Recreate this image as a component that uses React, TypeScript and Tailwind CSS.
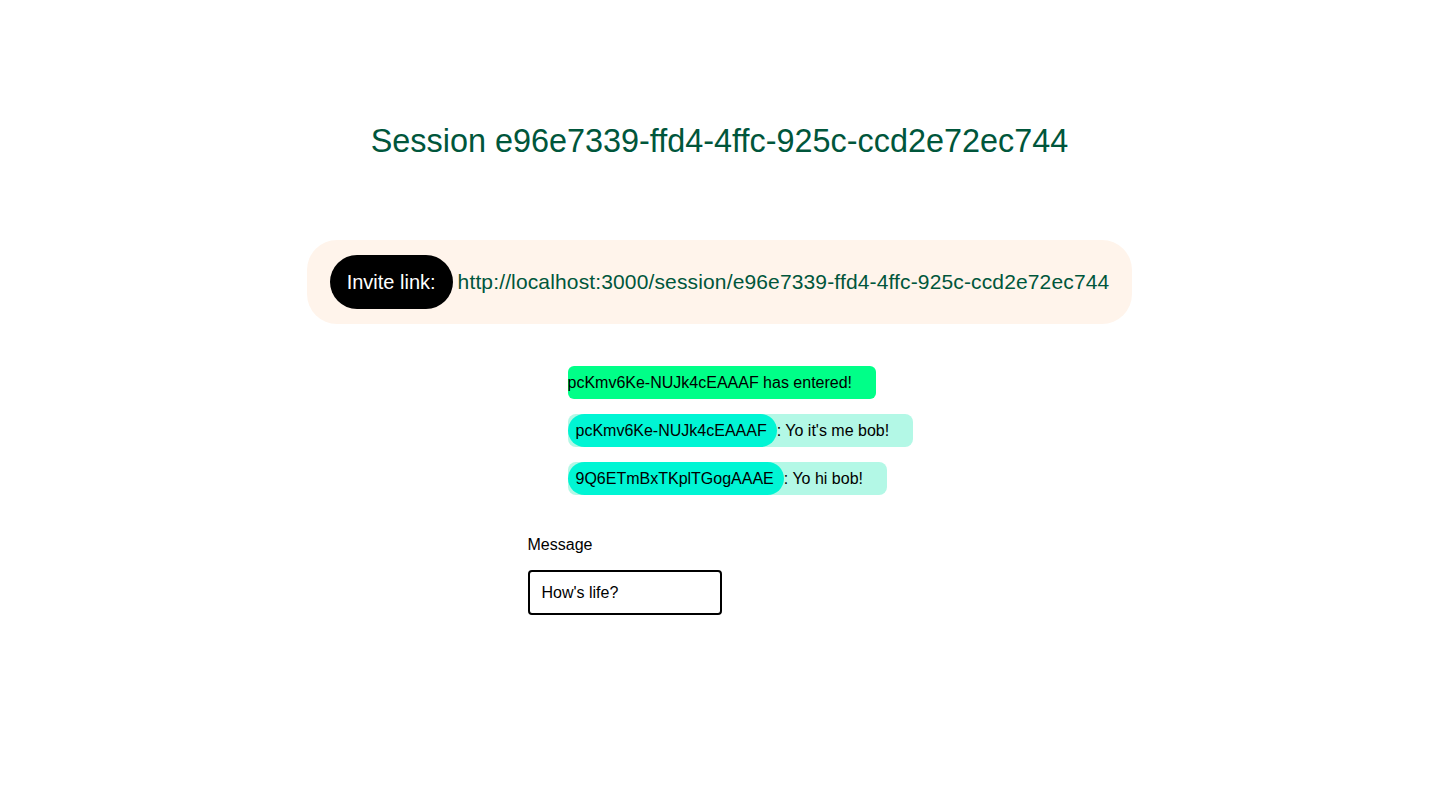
export default function App() {
  const messages = [
    { user: "pcKmv6Ke-NUJk4cEAAAF", text: ": Yo it's me bob!" },
    { user: "9Q6ETmBxTKplTGogAAAE", text: ": Yo hi bob!" },
  ];

  return (
    <div className="min-h-screen bg-white font-['Liberation_Sans',Arial,sans-serif] text-black">
      <div className="flex flex-col items-center pt-[121px]">
        <h1 className="text-[32.4px] leading-[40px] text-[#00563b]">
          Session e96e7339-ffd4-4ffc-925c-ccd2e72ec744
        </h1>

        {/* Invite link */}
        <div className="mt-[79px] flex items-center gap-[5px] rounded-[30px] bg-[#fff4eb] py-[15px] pl-[23px] pr-[23px]">
          <span className="rounded-full bg-black px-[17px] py-[14px] text-[20px] leading-[26px] text-white">
            Invite link:
          </span>
          <span className="text-[21px] tracking-[0.14px] leading-[26px] text-[#00563b]">
            http://localhost:3000/session/e96e7339-ffd4-4ffc-925c-ccd2e72ec744
          </span>
        </div>
      </div>

      <div className="mx-auto w-[384px]">
        <ul className="mt-[42px] flex flex-col items-start gap-[15px] pl-10">
          <li className="whitespace-nowrap rounded-[6px] bg-[#00ff88] pr-6 text-[16px] leading-[33px]">
            pcKmv6Ke-NUJk4cEAAAF has entered!
          </li>
          {messages.map((m) => (
            <li key={m.user} className="flex shrink-0 items-center whitespace-nowrap rounded-[8px] bg-[#b3f8e6] pr-6 text-[16px] leading-[33px]">
              <span className="rounded-full bg-[#00f5d4] pl-2 pr-[10px]">{m.user}</span>
              <span>{m.text}</span>
            </li>
          ))}
        </ul>

        <form className="mt-[38px]" onSubmit={(e) => e.preventDefault()}>
          <label className="block text-[16px] leading-[24px]">Message</label>
          <input
            type="text"
            defaultValue="How's life?"
            className="mt-[13px] h-[45px] w-[194px] rounded-[4px] border-2 border-black px-3 text-[16px] outline-none"
          />
        </form>
      </div>
    </div>
  );
}
